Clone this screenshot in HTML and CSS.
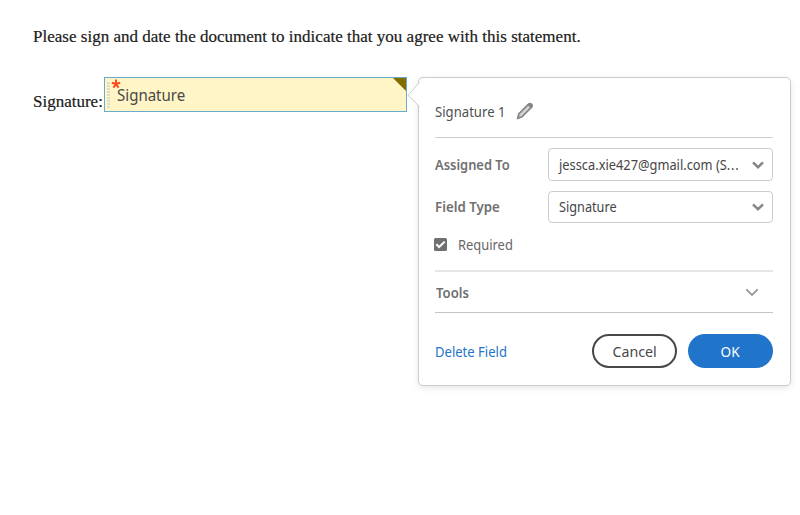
FILE: index.html
```html
<!DOCTYPE html>
<html lang="en">
<head>
<meta charset="utf-8">
<title>Signature field</title>
<link rel="stylesheet" href="styles.css">
</head>
<body>
<main class="document">
  <p class="statement">Please sign and date the document to indicate that you agree with this statement.</p>
  <div class="signature-row">
    <span class="signature-label">Signature:</span>
    <div class="field">
      <span class="grip"></span>
      <svg class="asterisk" viewBox="0 0 10 10"><path d="M5 5V.6M5 5L.8 3.8M5 5l4.2-1.2M5 5L2.4 8.6M5 5l2.6 3.6"/></svg>
      <span class="field-name">Signature</span>
      <span class="corner"></span>
    </div>
  </div>
</main>
<section class="popover">
  <svg class="pointer" viewBox="0 0 13 26"><path d="M12.5 .5L1 13.3l11.5 11.2"/></svg>
  <header class="heading">
    <span class="title">Signature 1</span>
    <svg class="pencil" viewBox="0 0 18 18"><path class="pencil-body" d="M1.8 16.2l1-4.2L12.3 2.4q1.5-1.4 3-.2 1.5 1.5.2 3L6 14.8z"/><path class="pencil-lead" d="M11.3 2.9l3.7 3.7 1.4-1.7-.8-2.5-2.3-.8zM1.2 16.8l1-3.4L4.6 15.9z"/></svg>
  </header>
  <div class="form-row assigned">
    <span class="label label-assigned">Assigned To</span>
    <div class="select"><span class="value-mail">jessca.xie427@gmail.com (S<span class="dots">...</span></span><svg class="chevron" viewBox="0 0 12 8"><path d="M1 1.3l5 4.9 5-4.9"/></svg></div>
  </div>
  <div class="form-row type">
    <span class="label label-type">Field Type</span>
    <div class="select"><span class="value-type">Signature</span><svg class="chevron" viewBox="0 0 12 8"><path d="M1 1.3l5 4.9 5-4.9"/></svg></div>
  </div>
  <div class="check-row">
    <svg class="checkbox" viewBox="0 0 13 13"><rect width="13" height="13" rx="1.5"/><path d="M2.3 6.2l2.8 2.8 5.6-5.4"/></svg>
    <span class="required">Required</span>
  </div>
  <div class="tools">
    <span class="label label-tools">Tools</span>
    <svg class="chevron thin" viewBox="0 0 14 9"><path d="M1.3 1.3L7 7l5.7-5.7"/></svg>
  </div>
  <footer class="actions">
    <span class="delete">Delete Field</span>
    <span class="button cancel"><span class="cancel-text">Cancel</span></span>
    <span class="button ok"><span class="ok-text">OK</span></span>
  </footer>
</section>
</body>
</html>
```
FILE: styles.css
```css
* { box-sizing: border-box; }
body {
  margin: 0;
  height: 515px;
  overflow: hidden;
  background: #fff;
  font-family: "Noto Sans", sans-serif;
  font-size: 14.5px;
  line-height: 20px;
  color: #505050;
  white-space: nowrap;
}
.document { padding: 27px 0 0 33px; }
.statement, .signature-label {
  font-family: "Liberation Serif", serif;
  font-size: 17px;
  color: #202020;
  -webkit-text-stroke: .2px #202020;
}
.statement { margin: 0 0 30px; letter-spacing: .012px; }
.signature-row { display: flex; }
.signature-label { width: 71px; padding-top: 15px; }
.field {
  position: relative;
  width: 303px;
  height: 35px;
  padding: 7px 0 0 12px;
  background: #fff5c7;
  border: 1px solid #6aaace;
  color: #484848;
}

/* Condensed text: narrows the glyphs from their left edge. */
.field-name, .title, .label, .value-mail, .value-type, .required, .delete {
  display: inline-block;
  transform-origin: left center;
}
.field-name { font-size: 16px; transform: scaleX(.94); }
.title { width: 81px; transform: scaleX(.905); }
.label { font-weight: 600; color: #707070; }
.label-assigned { transform: scaleX(.89); }
.label-type { transform: scaleX(.915); }
.label-tools { transform: scaleX(.905); }
.value-mail { transform: scaleX(.885); }
.dots { letter-spacing: .8px; }
.value-type { transform: scaleX(.875); }
.required { color: #666; transform: scaleX(.89); }
.delete { color: #2474c8; transform: scaleX(.9); }
.cancel-text { transform: scaleX(.98); }
.ok-text { transform: scaleX(.94); }

.grip {
  position: absolute;
  left: 2px;
  top: 4px;
  width: 3px;
  height: 26px;
  background: repeating-linear-gradient(#e0dbc5 0 2px, transparent 2px 3px);
}
.asterisk {
  position: absolute;
  left: 6px;
  top: 1px;
  width: 10px;
  height: 10px;
  fill: none;
  stroke: #ff4a1c;
  stroke-width: 2;
}
.corner {
  position: absolute;
  right: 0;
  top: 0;
  width: 13px;
  height: 13px;
  background: #806c00;
  clip-path: polygon(0 0, 100% 0, 100% 100%);
}
.popover {
  position: absolute;
  left: 418px;
  top: 77px;
  width: 373px;
  height: 309px;
  padding: 0 17px 0 16px;
  background: #fff;
  border: 1px solid #ccc;
  border-radius: 5px;
  box-shadow: 0 2px 6px rgba(0, 0, 0, .1);
}
.pointer {
  position: absolute;
  left: -12px;
  top: 4px;
  width: 13px;
  height: 26px;
  fill: #fff;
  stroke: #ccc;
}
.heading {
  display: flex;
  height: 60px;
  padding-top: 23px;
  border-bottom: 1px solid #ccc;
}
.pencil { width: 18px; height: 18px; margin: 1px 0 0; }
.pencil-body { fill: #d3d3d3; stroke: #858585; stroke-width: 1.7; }
.pencil-lead { fill: #858585; }
.form-row { display: flex; justify-content: space-between; margin-top: 10px; }
.type { margin-top: 10px; }
.form-row .label { padding-top: 6px; }
.select {
  display: flex;
  justify-content: space-between;
  width: 225px;
  height: 33px;
  padding: 5px 8px 0 10px;
  border: 1px solid #ccc;
  border-radius: 4px;
  color: #454545;
}
.type .label { padding-top: 5px; }
.type .select { height: 32px; padding-top: 4px; }
.value-mail { width: 180px; }
.chevron {
  flex: none;
  width: 12px;
  height: 8px;
  margin-top: 7px;
  fill: none;
  stroke: #858585;
  stroke-width: 2.4;
}
.check-row { display: flex; height: 20px; margin-top: 11px; }
.checkbox { width: 13px; height: 13px; margin: 4px 11px 0 -1px; }
.checkbox rect { fill: #707070; }
.checkbox path { fill: none; stroke: #fff; stroke-width: 2; }
.tools {
  display: flex;
  align-items: center;
  justify-content: space-between;
  height: 43px;
  margin-top: 16px;
  padding: 0 14px 0 1px;
  border-top: 2px solid #e6e6e6;
  border-bottom: 1px solid #c4c4c4;
}
.thin { width: 14px; height: 9px; margin: 0; stroke: #999; stroke-width: 1.9; }
.actions { display: flex; align-items: center; margin-top: 21px; }
.delete { margin-right: auto; }
.button {
  display: flex;
  align-items: center;
  justify-content: center;
  width: 85px;
  height: 34px;
  border-radius: 17px;
}
.cancel { border: 2px solid #484848; color: #484848; }
.ok { margin-left: 11px; background: #2074c9; color: #fff; }
```
